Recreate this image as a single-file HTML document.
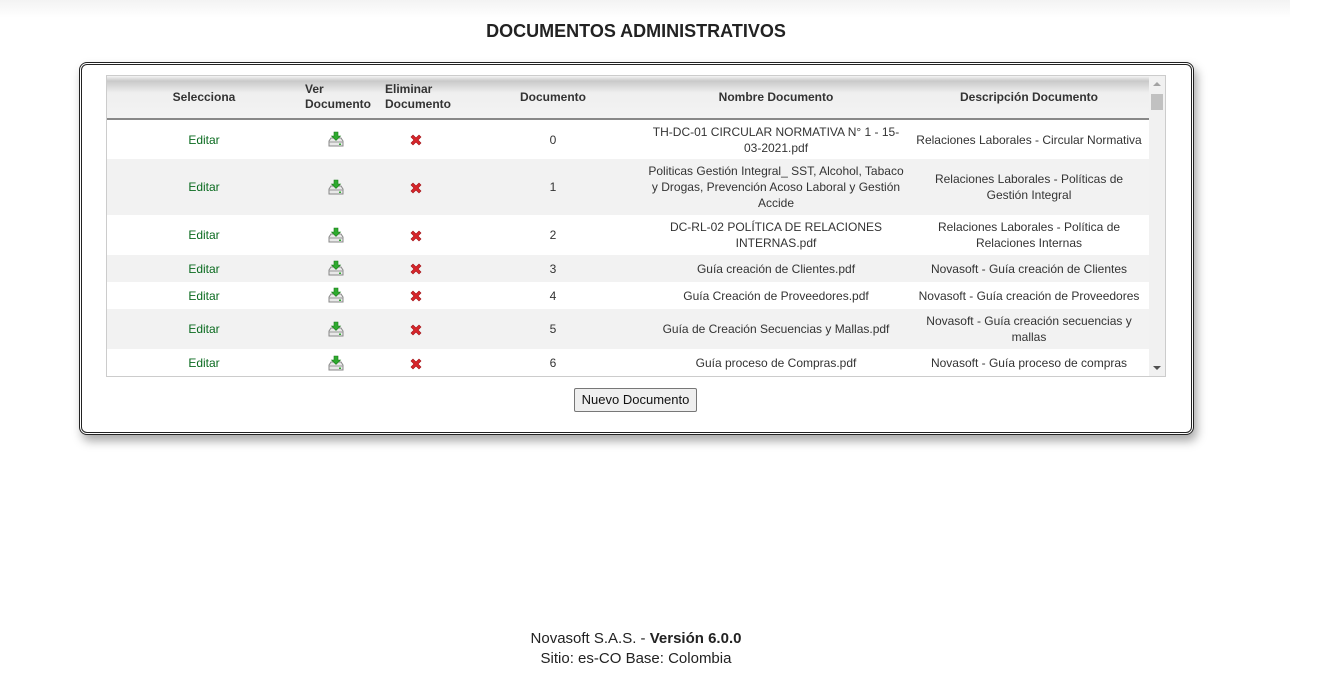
<!DOCTYPE html>
<html><head><meta charset="utf-8"><style>
body{margin:0;width:1324px;height:693px;background:#fff;font-family:"Liberation Sans",sans-serif;position:relative;overflow:hidden;color:#333}
.top{position:absolute;left:0;top:0;width:1290px;height:18px;background:linear-gradient(#f3f3f3,#fff)}
h1{position:absolute;top:21px;left:0;width:1272px;text-align:center;margin:0;font-size:18px;font-weight:bold;color:#222}
.box{position:absolute;left:79px;top:62px;width:1109px;height:367px;border:3px double #222;border-radius:8px;box-shadow:3px 6px 10px rgba(0,0,0,.35);background:#fff}
.grid{position:absolute;left:106px;top:75px;width:1058px;height:300px;border:1px solid #ccc;overflow:hidden}
table{border-collapse:collapse;table-layout:fixed;width:1042px;font-size:12px}
th{height:42px;background:linear-gradient(#f4f4f4 0%,#c9c9c9 12%,#efefef 40%,#f3f3f3 100%);border-bottom:2px solid #888;font-weight:bold;color:#333;padding:0;line-height:15px}
td{text-align:center;padding:0 4px;line-height:16px}
td.i1{padding:0 12px 0 0}
td.i2{padding:0 14px 0 0}
tr.g td{background:#f2f2f2}
.ed{color:#0b6b20}
.sb{position:absolute;right:0;top:0;width:16px;height:300px;background:#f1f1f1}
.sb .t{position:absolute;left:2px;top:18px;width:12px;height:16px;background:#c1c1c1}
.sb .u,.sb .d{position:absolute;left:4px;width:0;height:0;border-left:4px solid transparent;border-right:4px solid transparent}
.sb .u{top:6px;border-bottom:4px solid #a3a3a3}
.sb .d{bottom:6px;border-top:4px solid #505050}
.foot{position:absolute;top:629px;left:0;width:1272px;text-align:center;font-size:15px;line-height:20px;color:#222}
.btn{position:absolute;left:574px;top:388px;width:121px;height:22px;border:1px solid #777;border-radius:2px;background:#efefef;font-size:13px;text-align:center;line-height:22px;color:#111}
</style></head><body>
<div class="top"></div>
<h1>DOCUMENTOS ADMINISTRATIVOS</h1>
<div class="box"></div>
<div class="grid">
<table>
<colgroup><col style="width:194px"><col style="width:82px"><col style="width:80px"><col style="width:180px"><col style="width:266px"><col style="width:240px"></colgroup>
<thead><tr><th>Selecciona</th><th style="text-align:left;padding-left:4px">Ver Documento</th><th style="text-align:left;padding-left:2px">Eliminar Documento</th><th>Documento</th><th>Nombre Documento</th><th>Descripción Documento</th></tr></thead>
<tbody>
<tr style="height:40px"><td class="ed">Editar</td><td class="i1"></td><td class="i2"></td><td>0</td><td>TH-DC-01 CIRCULAR NORMATIVA N° 1 - 15-03-2021.pdf</td><td>Relaciones Laborales - Circular Normativa</td></tr>
<tr class="g" style="height:56px"><td class="ed">Editar</td><td class="i1"></td><td class="i2"></td><td>1</td><td>Politicas Gestión Integral_ SST, Alcohol, Tabaco y Drogas, Prevención Acoso Laboral y Gestión Accide</td><td>Relaciones Laborales - Políticas de Gestión Integral</td></tr>
<tr style="height:40px"><td class="ed">Editar</td><td class="i1"></td><td class="i2"></td><td>2</td><td>DC-RL-02 POLÍTICA DE RELACIONES INTERNAS.pdf</td><td>Relaciones Laborales - Política de Relaciones Internas</td></tr>
<tr class="g" style="height:27px"><td class="ed">Editar</td><td class="i1"></td><td class="i2"></td><td>3</td><td>Guía creación de Clientes.pdf</td><td>Novasoft - Guía creación de Clientes</td></tr>
<tr style="height:27px"><td class="ed">Editar</td><td class="i1"></td><td class="i2"></td><td>4</td><td>Guía Creación de Proveedores.pdf</td><td>Novasoft - Guía creación de Proveedores</td></tr>
<tr class="g" style="height:40px"><td class="ed">Editar</td><td class="i1"></td><td class="i2"></td><td>5</td><td>Guía de Creación Secuencias y Mallas.pdf</td><td>Novasoft - Guía creación secuencias y mallas</td></tr>
<tr style="height:28px"><td class="ed">Editar</td><td class="i1"></td><td class="i2"></td><td>6</td><td>Guía proceso de Compras.pdf</td><td>Novasoft - Guía proceso de compras</td></tr>
</tbody></table>
<div class="sb"><div class="u"></div><div class="t"></div><div class="d"></div></div>
</div>
<div class="btn">Nuevo Documento</div>
<div class="foot">Novasoft S.A.S. - <b>Versión 6.0.0</b><br>Sitio: es-CO Base: Colombia</div>
<script>
var dl='<svg width="18" height="17" viewBox="0 0 18 17" style="vertical-align:middle"><path d="M2 10 L4 7 H14 L16 10 V15 H2 Z" fill="#e8e8e8" stroke="#888"/><line x1="2" y1="11" x2="16" y2="11" stroke="#999"/><rect x="12" y="12.5" width="2" height="1.5" fill="#3a3"/><path d="M7 1 H11 V5 H13.5 L9 9.5 L4.5 5 H7 Z" fill="#2eaa2e" stroke="#1a7a1a" stroke-width=".6"/></svg>';
var x='<svg width="14" height="14" viewBox="0 0 14 14" style="vertical-align:middle"><path d="M2 4 L4 2 L7 5 L10 2 L12 4 L9 7 L12 10 L10 12 L7 9 L4 12 L2 10 L5 7 Z" fill="#d8262b" stroke="#a01015" stroke-width=".6"/></svg>';
document.querySelectorAll('tbody tr').forEach(function(r){r.cells[1].innerHTML=dl;r.cells[2].innerHTML=x;});
</script>
</body></html>
